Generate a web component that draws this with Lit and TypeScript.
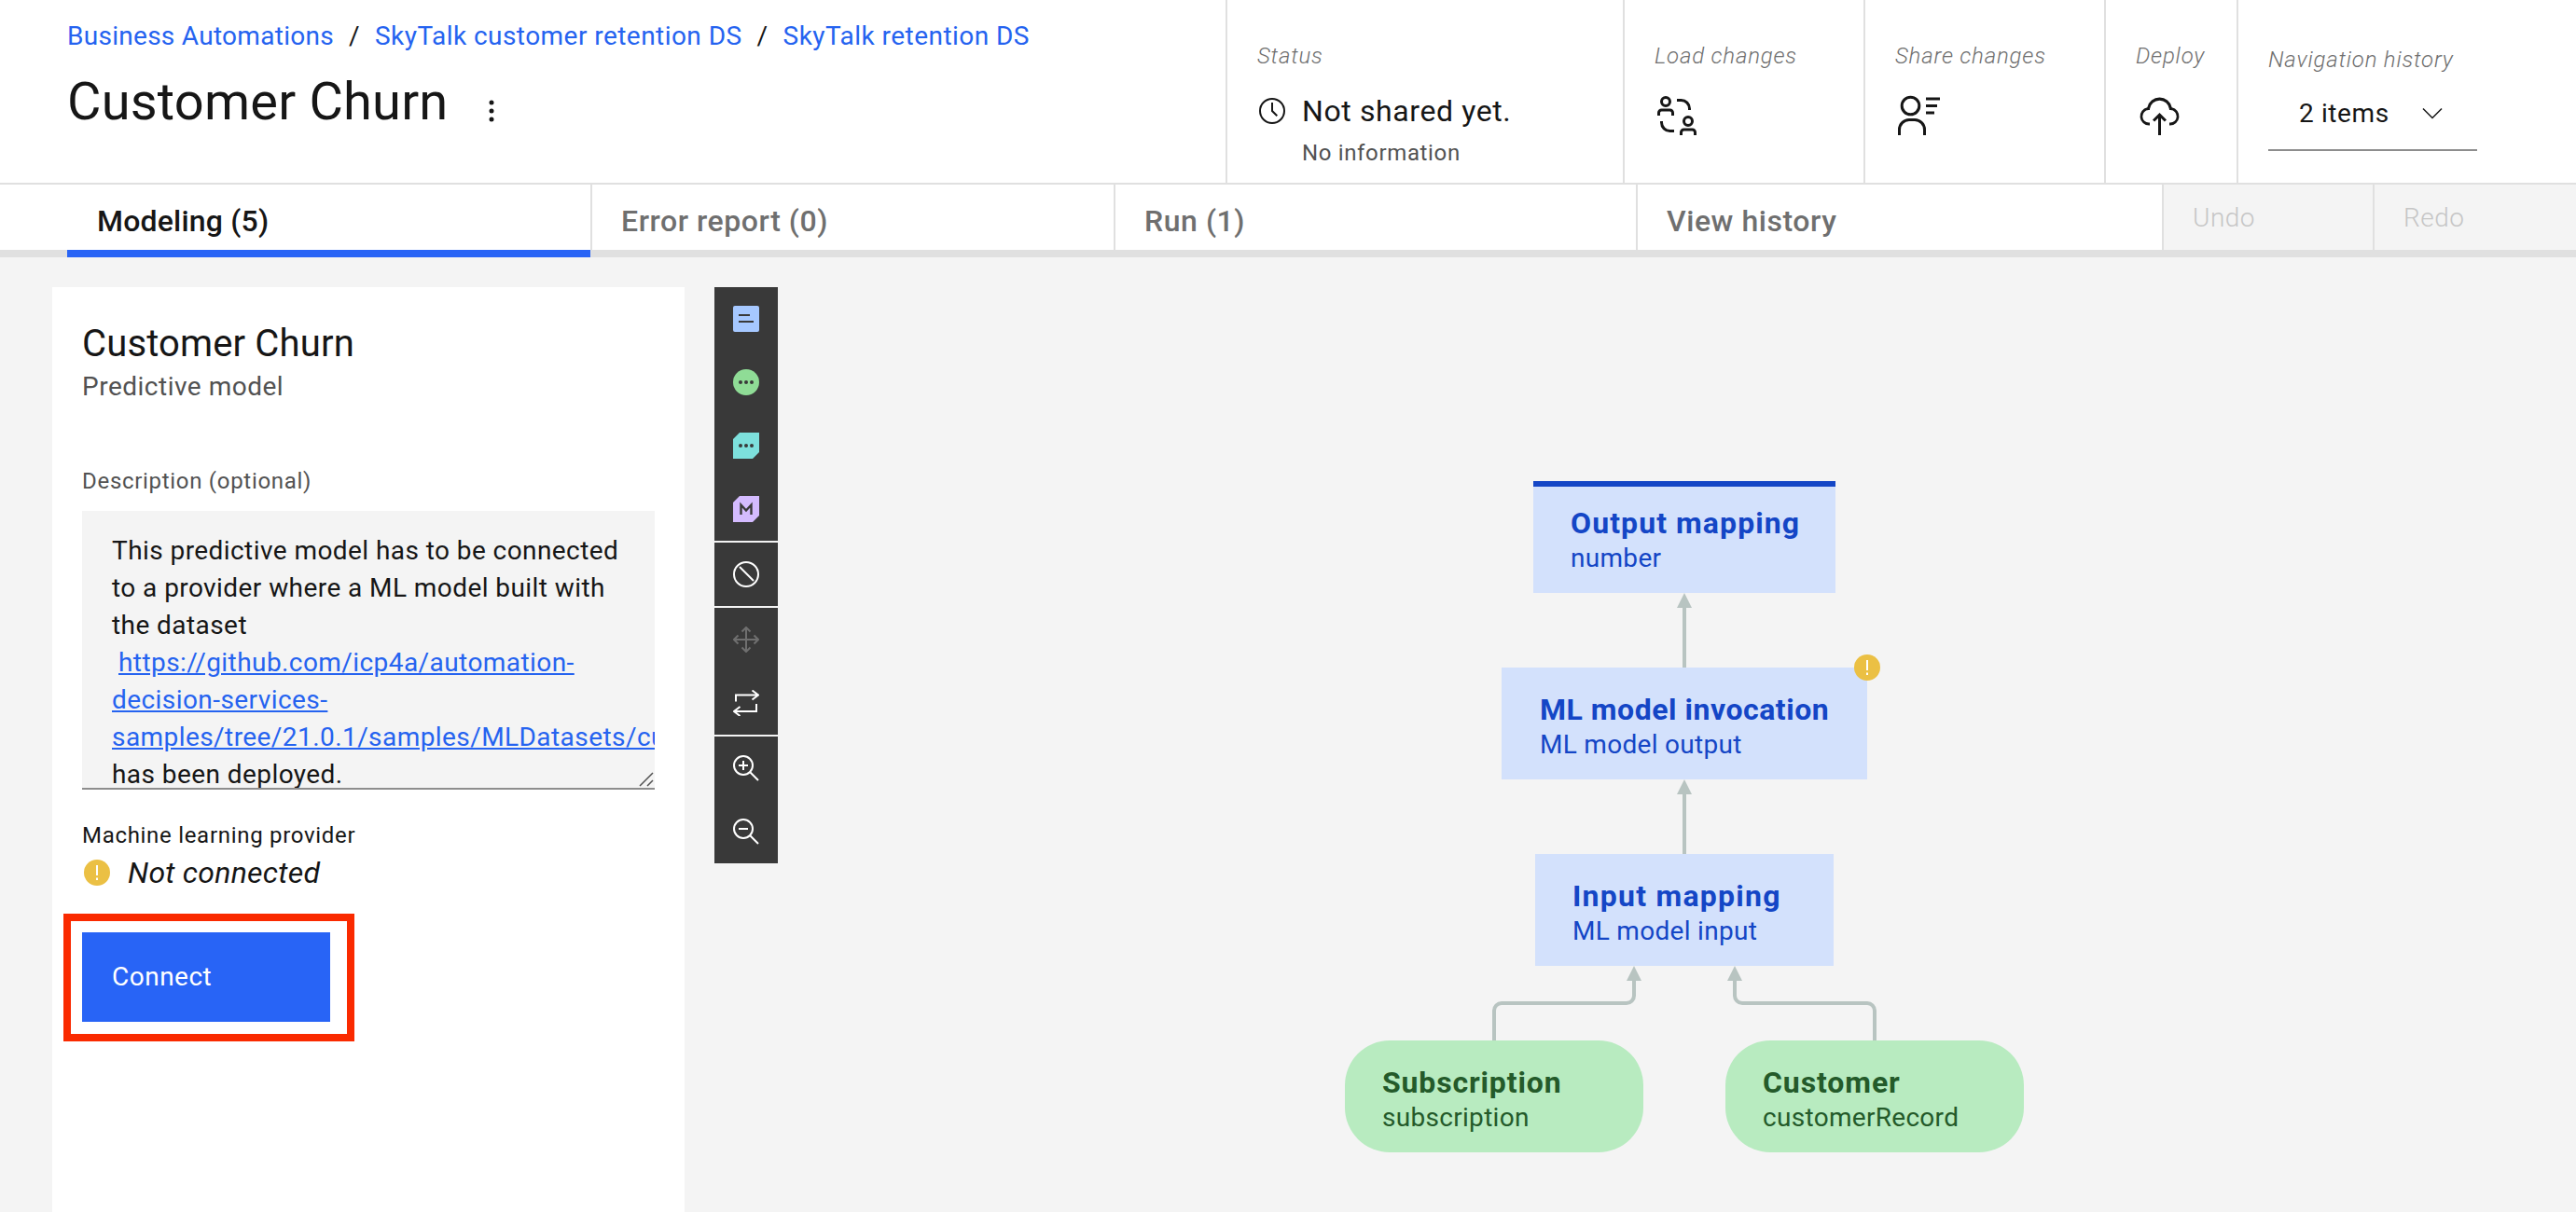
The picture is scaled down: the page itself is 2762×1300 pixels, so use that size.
import { LitElement, html, css, svg } from 'lit';
import { customElement } from 'lit/decorators.js';

const ICON_CLOCK = svg`<path d="M16 30a14 14 0 1 1 14-14 14 14 0 0 1-14 14zm0-26a12 12 0 1 0 12 12A12 12 0 0 0 16 4z"/><path d="M20.6 22 15 16.4V7h2v8.6l5 5z"/>`;
const ICON_COLLABORATE = svg`<path d="M6 21v-1H4v1a7 7 0 0 0 7 7h3v-2h-3a5 5 0 0 1-5-5zm18-10v1h2v-1a7 7 0 0 0-7-7h-3v2h3a5 5 0 0 1 5 5zM11 11H5a3 3 0 0 0-3 3v2h2v-2a1 1 0 0 1 1-1h6a1 1 0 0 1 1 1v2h2v-2a3 3 0 0 0-3-3zM8 10a4 4 0 1 0-4-4 4 4 0 0 0 4 4zm0-6a2 2 0 1 1-2 2 2 2 0 0 1 2-2zM27 25h-6a3 3 0 0 0-3 3v2h2v-2a1 1 0 0 1 1-1h6a1 1 0 0 1 1 1v2h2v-2a3 3 0 0 0-3-3zM24 24a4 4 0 1 0-4-4 4 4 0 0 0 4 4zm0-6a2 2 0 1 1-2 2 2 2 0 0 1 2-2z"/>`;
const ICON_SHARE = svg`<g fill="none" stroke="#161616" stroke-width="2"><circle cx="11" cy="9" r="6.2"/><path d="M3 30v-4a7 7 0 0 1 7-7h4a7 7 0 0 1 7 7v4"/><path d="M22 4h10M22 9h8M22 14h6"/></g>`;
const ICON_UPLOAD = svg`<g transform="translate(1 1)"><path d="m11 18 1.41 1.41L15 16.83V29h2V16.83l2.59 2.58L21 18l-5-5-5 5z"/><path d="M23.5 22H23v-2h.5a4.5 4.5 0 0 0 .36-9H23l-.1-.82a7 7 0 0 0-13.88 0L9 11h-.86a4.5 4.5 0 0 0 .36 9H9v2h-.5A6.5 6.5 0 0 1 7.2 9.14a9 9 0 0 1 17.6 0A6.5 6.5 0 0 1 23.5 22z"/></g>`;

const DOTS = svg`<g fill="#393939"><circle cx="8" cy="14" r="2"/><circle cx="14" cy="14" r="2"/><circle cx="20" cy="14" r="2"/></g>`;
const CUT = '7,0 28,0 28,21 21,28 0,28 0,7';

// one array per toolbar group, 68px cell each
const TOOL_GROUPS = [
  [
    svg`<rect width="28" height="28" rx="2" fill="#a6c8ff"/><path d="M6 10h12M6 17h16" stroke="#393939" stroke-width="2"/>`,
    svg`<rect width="28" height="28" rx="14" fill="#8fdc96"/>${DOTS}`,
    svg`<polygon points=${CUT} fill="#7de0dc"/>${DOTS}`,
    svg`<polygon points=${CUT} fill="#d4bbff"/><path d="M8.500 20V9.500l5.500 6 5.500-6V20" fill="none" stroke="#393939" stroke-width="2.400"/>`,
  ],
  [
    svg`<g fill="none" stroke="#fff" stroke-width="2"><circle cx="14" cy="14" r="13"/><path d="m7 6 15 15"/></g>`,
  ],
  [
    svg`<g fill="none" stroke="#6f6f6f" stroke-width="2"><path d="M14 1v26M1 14h26M9.500 5.500 14 1l4.500 4.500M9.500 22.500 14 27l4.500-4.500M5.500 9.500 1 14l4.500 4.500M22.500 9.500 27 14l-4.500 4.500"/></g>`,
    svg`<g fill="none" stroke="#fff" stroke-width="2"><path d="M3 12.500V5.500h24M20.500.5l6.500 5-6.500 5M25 15v8H1.500M7.500 18 1 23l6.500 5"/></g>`,
  ],
  [
    svg`<g fill="none" stroke="#fff" stroke-width="2"><circle cx="11" cy="11" r="10"/><path d="m18 18 9 9M11 6v10M6 11h10"/></g>`,
    svg`<g fill="none" stroke="#fff" stroke-width="2"><circle cx="11" cy="11" r="10"/><path d="m18 18 9 9M6 11h10"/></g>`,
  ],
];

// canvas origin is at 834,276 of the page
const NODES = [
  { name: 'Output mapping', sub: 'number', x: 810, y: 240, w: 324, pad: 40, ls: 1.08, kind: 'task output' },
  { name: 'ML model invocation', sub: 'ML model output', x: 776, y: 440, w: 392, pad: 41, ls: 0.52, kind: 'task', warn: true },
  { name: 'Input mapping', sub: 'ML model input', x: 812, y: 640, w: 320, pad: 40, ls: 1.24, kind: 'task' },
  { name: 'Subscription', sub: 'subscription', x: 608, y: 840, w: 320, pad: 40, ls: 0.85, kind: 'data' },
  { name: 'Customer', sub: 'customerRecord', x: 1016, y: 840, w: 320, pad: 40, ls: 0.9, kind: 'data' },
];

const EDGES = [
  'M972 440V375',
  'M972 640V575',
  'M768 840V808a8 8 0 0 1 8-8h134a8 8 0 0 0 8-8V775',
  'M1176 840V808a8 8 0 0 0-8-8H1034a8 8 0 0 1-8-8V775',
];
const ARROWS = [[972, 360], [972, 560], [918, 760], [1026, 760]];

const STATUS_COLS = [
  { label: 'Load changes', w: 258, icon: ICON_COLLABORATE },
  { label: 'Share changes', w: 258, icon: ICON_SHARE },
  { label: 'Deploy', w: 142, icon: ICON_UPLOAD },
];

const warnIcon = () => html`<svg class="warn" viewBox="0 0 28 28">
  <circle cx="14" cy="14" r="14" fill="#ebc044"/>
  <rect x="13" y="6" width="2" height="11" fill="#fff"/>
  <rect x="13" y="19.500" width="2" height="2.500" fill="#fff"/>
</svg>`;

@customElement('app-root')
export class AppRoot extends LitElement {
  static styles = css`
    :host {
      display: block;
      width: 2762px;
      height: 1300px;
      overflow: hidden;
      background: #f4f4f4;
      font-family: 'Roboto', sans-serif;
      color: #161616;
    }

    /* header */
    .header {
      display: flex;
      height: 196px;
      background: #fff;
      border-bottom: 2px solid #e0e0e0;
    }
    .title-area {
      flex: 1;
      padding: 19px 0 0 72px;
    }
    .crumbs {
      display: flex;
      white-space: nowrap;
      font-size: 28px;
      line-height: 40px;
      letter-spacing: 0.45px;
      color: #2563f0;
    }
    .crumbs .first {
      letter-spacing: 0.28px;
    }
    .crumbs .sep {
      color: #161616;
      margin: 0 16px;
    }
    .title-row {
      display: flex;
      align-items: center;
      margin-top: 14px;
    }
    .title {
      font-size: 56px;
      line-height: 72px;
      font-weight: 400;
      letter-spacing: 0.2px;
    }
    .dots {
      width: 6px;
      height: 24px;
      margin: 20px 0 0 44px;
      fill: #161616;
    }
    .col {
      flex: none;
      box-sizing: border-box;
      border-left: 2px solid #e0e0e0;
      padding: 42px 0 0 32px;
    }
    .col-label {
      font-size: 24px;
      line-height: 36px;
      font-style: italic;
      font-weight: 300;
      letter-spacing: 0.8px;
      color: #6f6f6f;
    }
    .col svg {
      display: block;
      width: 48px;
      height: 48px;
      margin-top: 22px;
      fill: #161616;
    }
    .status {
      width: 426px;
    }
    .status-row {
      display: flex;
      align-items: center;
      margin-top: 21px;
    }
    .status-row svg {
      width: 32px;
      height: 32px;
      margin: 0 16px 0 0;
    }
    .status-text {
      font-size: 32px;
      line-height: 40px;
      font-weight: 400;
      letter-spacing: 0.6px;
    }
    .status-sub {
      margin: 7px 0 0 48px;
      font-size: 24px;
      line-height: 36px;
      font-weight: 400;
      letter-spacing: 0.65px;
      color: #525252;
    }
    .nav-col {
      width: 364px;
      padding-top: 46px;
    }
    .select {
      display: flex;
      align-items: center;
      justify-content: space-between;
      box-sizing: border-box;
      width: 224px;
      height: 68px;
      margin-top: 12px;
      padding: 0 32px 12px 33px;
      border-bottom: 2px solid #8d8d8d;
      font-size: 28px;
      font-weight: 400;
      letter-spacing: 0.6px;
    }
    .select svg {
      width: 32px;
      height: 32px;
      margin: 0;
      fill: none;
      stroke: #161616;
      stroke-width: 1.500;
    }

    /* tabs */
    .tabs {
      display: flex;
      height: 70px;
      padding-left: 72px;
      background: #fff;
      border-bottom: 8px solid #e0e0e0;
    }
    .tab {
      box-sizing: border-box;
      height: 78px;
      padding: 19px 0 0 31px;
      font-size: 32px;
      line-height: 40px;
      font-weight: 500;
      letter-spacing: 0.55px;
      color: #6f6f6f;
    }
    .tab + .tab {
      height: 70px;
      border-left: 2px solid #e0e0e0;
    }
    .tab.active {
      color: #161616;
      padding-left: 32px;
      letter-spacing: 0.2px;
      border-bottom: 8px solid #2864f6;
    }
    .action {
      box-sizing: border-box;
      padding: 16px 0 0 31px;
      background: #f4f4f4;
      border-left: 2px solid #e0e0e0;
      font-size: 28px;
      line-height: 40px;
      font-weight: 300;
      letter-spacing: 0.5px;
      color: #c6c6c6;
    }

    /* main row */
    .main {
      display: flex;
      height: 1024px;
    }
    .panel {
      box-sizing: border-box;
      width: 678px;
      margin: 32px 0 0 56px;
      padding: 33px 32px 0;
      background: #fff;
    }
    .panel-title {
      font-size: 40px;
      line-height: 56px;
      font-weight: 400;
      letter-spacing: 0.15px;
    }
    .panel-sub {
      font-size: 28px;
      line-height: 36px;
      font-weight: 400;
      letter-spacing: 0.5px;
      color: #525252;
    }
    .field-label {
      margin-top: 67px;
      font-size: 24px;
      line-height: 32px;
      letter-spacing: 0.7px;
      font-weight: 400;
      color: #525252;
    }
    .textarea {
      position: relative;
      box-sizing: border-box;
      width: 614px;
      height: 299px;
      margin-top: 16px;
      padding: 23px 0 0 32px;
      overflow: hidden;
      white-space: nowrap;
      background: #f4f4f4;
      border-bottom: 2px solid #8d8d8d;
      font-size: 28px;
      line-height: 40px;
      letter-spacing: 0.43px;
    }
    .textarea a {
      color: #2563f0;
      text-decoration: underline;
    }
    .indent {
      margin-left: 7px;
    }
    .grip {
      position: absolute;
      right: 1px;
      bottom: 1px;
      width: 16px;
      height: 16px;
    }
    .provider-label {
      margin-top: 33px;
      font-size: 24px;
      line-height: 32px;
      font-weight: 400;
      letter-spacing: 0.7px;
    }
    .provider {
      display: flex;
      align-items: center;
      height: 48px;
      font-size: 32px;
      font-style: italic;
      font-weight: 400;
      letter-spacing: 0.25px;
    }
    .warn {
      width: 28px;
      height: 28px;
    }
    .provider .warn {
      margin: 0 19px 0 2px;
    }
    .connect {
      position: relative;
      box-sizing: border-box;
      width: 266px;
      height: 96px;
      margin-top: 40px;
      padding: 28px 0 0 32px;
      background: #2864f6;
      color: #fff;
      font-size: 28px;
      line-height: 40px;
      font-weight: 400;
      letter-spacing: 0.5px;
    }
    .callout {
      position: absolute;
      top: -20px;
      left: -20px;
      right: -26px;
      bottom: -21px;
      border: 8px solid #fa2a00;
    }

    /* toolbar */
    .toolbar {
      display: flex;
      flex-direction: column;
      gap: 2px;
      align-self: flex-start;
      width: 68px;
      margin: 32px 0 0 32px;
    }
    .tool {
      display: flex;
      align-items: center;
      justify-content: center;
      width: 68px;
      height: 68px;
      background: #393939;
    }
    .tool svg {
      width: 28px;
      height: 28px;
    }

    /* diagram */
    .canvas {
      position: relative;
      flex: 1;
    }
    .edges {
      position: absolute;
      top: 0;
      left: 0;
      width: 1400px;
      height: 1024px;
      fill: #b8c4c1;
    }
    .node {
      position: absolute;
      box-sizing: border-box;
      height: 120px;
      padding-top: 25px;
      white-space: nowrap;
    }
    .node.task {
      background: #d3e1fc;
      color: #1446c6;
    }
    .node.output {
      padding-top: 19px;
      border-top: 6px solid #1446c6;
    }
    .node.data {
      background: #b8ebc0;
      color: #245a2a;
      border-radius: 48px;
    }
    .node-name {
      font-size: 32px;
      line-height: 40px;
      font-weight: 700;
    }
    .node-sub {
      font-size: 28px;
      line-height: 36px;
      font-weight: 400;
      letter-spacing: 0.3px;
    }
    .node .warn {
      position: absolute;
      top: -14px;
      right: -14px;
    }
  `;

  render() {
    return html`
      <div class="header">
        <div class="title-area">
          <div class="crumbs">
            <span class="first">Business Automations</span><span class="sep">/</span>SkyTalk customer retention DS<span class="sep">/</span>SkyTalk retention DS
          </div>
          <div class="title-row">
            <div class="title">Customer Churn</div>
            <svg class="dots" viewBox="0 0 6 24"><circle cx="3" cy="3" r="2.500"/><circle cx="3" cy="12" r="2.500"/><circle cx="3" cy="21" r="2.500"/></svg>
          </div>
        </div>
        <div class="col status">
          <div class="col-label">Status</div>
          <div class="status-row">
            <svg viewBox="0 0 32 32">${ICON_CLOCK}</svg>
            <div class="status-text">Not shared yet.</div>
          </div>
          <div class="status-sub">No information</div>
        </div>
        ${STATUS_COLS.map(
          (c) => html`<div class="col" style="width:${c.w}px">
            <div class="col-label">${c.label}</div>
            <svg viewBox="0 0 32 32">${c.icon}</svg>
          </div>`
        )}
        <div class="col nav-col">
          <div class="col-label">Navigation history</div>
          <div class="select">
            2 items
            <svg viewBox="0 0 32 32"><path d="m6 11.500 10 10 10-10"/></svg>
          </div>
        </div>
      </div>

      <div class="tabs">
        <div class="tab active" style="width:561px">Modeling (5)</div>
        <div class="tab" style="width:561px">Error report (0)</div>
        <div class="tab" style="width:560px">Run (1)</div>
        <div class="tab" style="width:564px">View history</div>
        <div class="action" style="width:226px">Undo</div>
        <div class="action" style="width:218px">Redo</div>
      </div>

      <div class="main">
        <div class="panel">
          <div class="panel-title">Customer Churn</div>
          <div class="panel-sub">Predictive model</div>
          <div class="field-label">Description (optional)</div>
          <div class="textarea">
            This predictive model has to be connected<br />
            to a provider where a ML model built with<br />
            the dataset<br />
            <a class="indent">https://github.com/icp4a/automation-</a><br />
            <a>decision-services-</a><br />
            <a>samples/tree/21.0.1/samples/MLDatasets/customer</a><br />
            has been deployed.
            <svg class="grip" viewBox="0 0 16 16"><path d="M1 15 15 1M9 15l6-6" stroke="#525252" stroke-width="1.500" fill="none"/></svg>
          </div>
          <div class="provider-label">Machine learning provider</div>
          <div class="provider">${warnIcon()}Not connected</div>
          <div class="connect">Connect<div class="callout"></div></div>
        </div>

        <div class="toolbar">
          ${TOOL_GROUPS.map(
            (group) => html`<div>
              ${group.map((icon) => html`<div class="tool"><svg viewBox="0 0 28 28">${icon}</svg></div>`)}
            </div>`
          )}
        </div>

        <div class="canvas">
          <svg class="edges" viewBox="0 0 1400 1024">
            ${EDGES.map((d) => svg`<path d=${d} fill="none" stroke="#b8c4c1" stroke-width="4"/>`)}
            ${ARROWS.map(([x, y]) => svg`<polygon points="${x},${y} ${x + 8},${y + 16} ${x - 8},${y + 16}"/>`)}
          </svg>
          ${NODES.map(
            (n) => html`<div
              class="node ${n.kind}"
              style="left:${n.x}px;top:${n.y}px;width:${n.w}px;padding-left:${n.pad}px"
            >
              <div class="node-name" style="letter-spacing:${n.ls}px">${n.name}</div>
              <div class="node-sub">${n.sub}</div>
              ${n.warn ? warnIcon() : ''}
            </div>`
          )}
        </div>
      </div>
    `;
  }
}
